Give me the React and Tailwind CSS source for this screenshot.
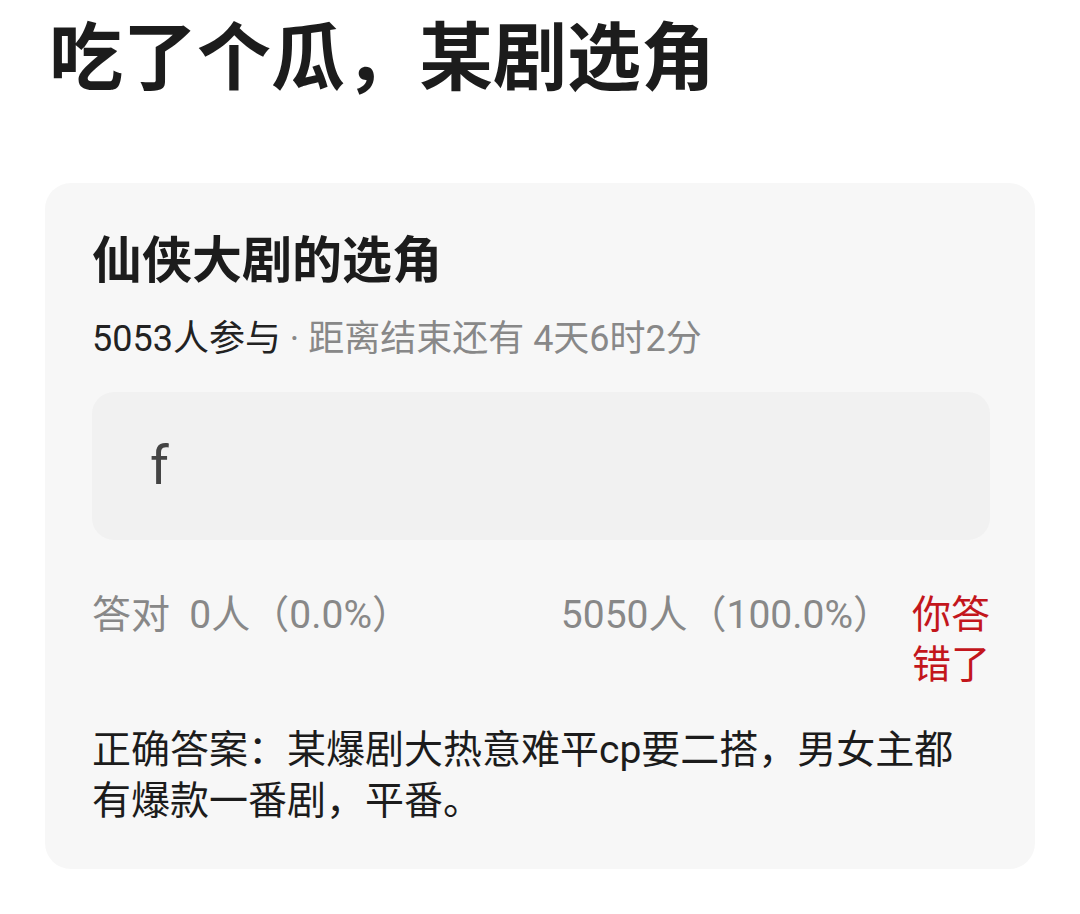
export default function App() {
  return (
    <div
      className="w-[1080px] h-[914px] overflow-hidden bg-white px-[45px] pt-[22px] font-['Roboto','Noto_Sans_CJK_SC',sans-serif]"
    >
      <h1 className="pl-[4px] text-[74px] leading-none font-bold text-[#1c1c1c]">
        吃了个瓜，某剧选角
      </h1>
      <div className="mt-[87px] rounded-[26px] bg-[#f7f7f7] pl-[47px] pr-[45px] pt-[53px] pb-[42px]">
        <h2 className="text-[50px] leading-none font-semibold text-[#1c1c1c]">
          仙侠大剧的选角
        </h2>
        <div className="mt-[35px] text-[36px] leading-none text-[#888888]">
          <span className="text-[#222222]">5053人参与</span> · 距离结束还有 4天6时2分
        </div>
        <div className="mt-[35px] h-[148px] rounded-[22px] bg-[#f1f1f1] flex items-center pl-[58px]">
          <span className="text-[54px] leading-none text-[#444444]">f</span>
        </div>
        <div className="mt-[50px] flex text-[39px] leading-[50px] text-[#888888]">
          <div className="flex-1 whitespace-pre">答对  0人（0.0%）</div>
          <div className="whitespace-nowrap">5050人（100.0%）</div>
          <div className="ml-[20px] w-[78px] text-[#c3161c]">你答错了</div>
        </div>
        <p className="mt-[35px] max-w-[880px] text-[39px] leading-[51px] text-[#1c1c1c]">
          正确答案：某爆剧大热意难平cp要二搭，男女主都有爆款一番剧，平番。
        </p>
      </div>
    </div>
  );
}
